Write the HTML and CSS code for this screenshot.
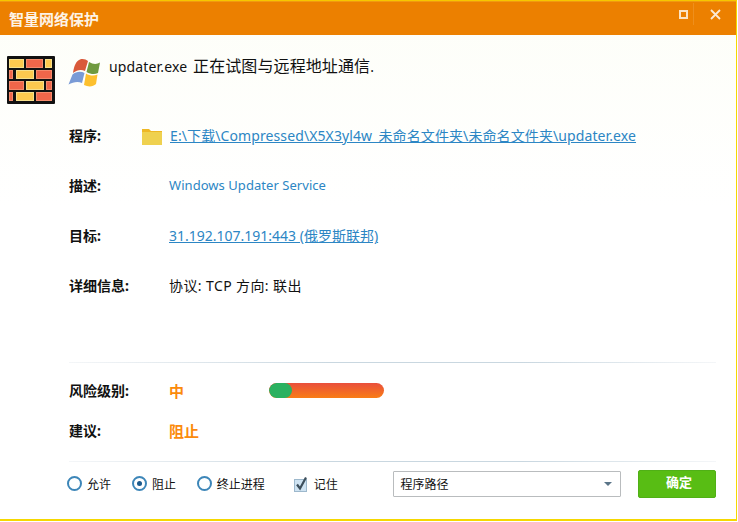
FILE: index.html
```html
<!DOCTYPE html>
<html lang="zh-CN">
<head>
<meta charset="utf-8">
<title>智量网络保护</title>
<link rel="stylesheet" href="styles.css">
</head>
<body>
<div class="window">
  <header class="titlebar">
    <span class="title">智量网络保护</span>
    <div class="winbtns">
      <span class="btn-max"><svg width="9" height="9" viewBox="0 0 9 9"><rect x="1" y="1" width="7" height="7" fill="none" stroke="#fbe3c4" stroke-width="2"/></svg></span>
      <span class="btn-close"><svg width="11" height="11" viewBox="0 0 11 11"><path d="M1 1 10 10M10 1 1 10" stroke="#fbe9d4" stroke-width="1.8" fill="none"/></svg></span>
    </div>
  </header>
  <main class="content">
    <section class="head">
      <svg class="wall" width="48" height="48" viewBox="0 0 48 48">
        <rect width="48" height="48" rx="1" fill="#111"/>
        <g fill="#fdc94f" stroke="#f7e08c" stroke-width="1">
          <rect x="2.500" y="3.500" width="14" height="8"/><rect x="38.500" y="3.500" width="6" height="8"/>
          <rect x="9.500" y="14.500" width="17" height="8"/>
          <rect x="19.500" y="25.500" width="17" height="8"/>
          <rect x="9.500" y="36.500" width="17" height="8"/>
        </g>
        <g fill="#f0664a" stroke="#f58a6c" stroke-width="1">
          <rect x="19.500" y="3.500" width="16" height="8"/>
          <rect x="2.500" y="14.500" width="3" height="8"/><rect x="29.500" y="14.500" width="15" height="8"/>
          <rect x="2.500" y="25.500" width="14" height="8"/><rect x="39.500" y="25.500" width="5" height="8"/>
          <rect x="2.500" y="36.500" width="3" height="8"/><rect x="29.500" y="36.500" width="15" height="8"/>
        </g>
      </svg>
      <svg class="winlogo" width="36" height="36" viewBox="0 0 36 36">
        <path d="M6 17C7 10 9 5 13 3.500C16 2.500 19 3.500 21 5L18 15C14 13 10 14 6 17Z" fill="#d9593a"/>
        <path d="M22 6C26 8.500 30 8.500 33 6.500L31 17C28 18.500 24 18.500 19.500 16Z" fill="#6f9a3f"/>
        <path d="M5.500 18.500C9 15.500 14 15 17.500 17L15 27C11 25 6 26 1.500 28.500Z" fill="#7a9bd6"/>
        <path d="M19 17.500C23 20 27 20 30.500 18.500L29 28C26 31 21 31 17 29Z" fill="#fdc02e"/>
      </svg>
      <h1 class="headline">updater.exe <span class="cjk-large">正在试图与远程地址通信</span>.</h1>
    </section>
    <dl class="info">
      <div class="row"><dt>程序:</dt><dd class="path"><svg class="folder" width="20" height="16" viewBox="0 0 20 16"><path d="M0 0H7L9 2H20V4H0Z" fill="#eeb825"/><rect y="3" width="20" height="13" fill="#efd14f"/></svg><a class="link" href="#">E:\下载\Compressed\X5X3yl4w_未命名文件夹\未命名文件夹\updater.exe</a></dd></div>
      <div class="row"><dt>描述:</dt><dd class="blue">Windows Updater Service</dd></div>
      <div class="row"><dt>目标:</dt><dd><a class="link" href="#">31.192.107.191:443 (俄罗斯联邦)</a></dd></div>
      <div class="row"><dt>详细信息:</dt><dd class="detail">协议: TCP 方向: 联出</dd></div>
    </dl>
    <hr class="rule rule-risk">
    <div class="risk">
      <div class="risk-row"><span class="label">风险级别:</span><span class="level">中</span><span class="bar"><span class="bar-fill"></span></span></div>
      <div class="risk-row"><span class="label">建议:</span><span class="level">阻止</span></div>
    </div>
    <hr class="rule rule-actions">
    <div class="actions">
      <label class="radio r1"><span class="dot"></span>允许</label>
      <label class="radio r2"><span class="dot on"></span>阻止</label>
      <label class="radio r3"><span class="dot"></span>终止进程</label>
      <label class="check"><svg width="14" height="16" viewBox="0 0 14 16"><rect x="0.500" y="3.500" width="12" height="12" fill="#cfe3f2" stroke="#9db8cc"/><path d="M3 8.500 6 12.500 12 1.500" fill="none" stroke="#3d4f5c" stroke-width="2.200"/></svg>记住</label>
      <div class="select"><span>程序路径</span><i class="caret"></i></div>
      <button class="ok" type="button">确定</button>
    </div>
  </main>
</div>
</body>
</html>
```

FILE: styles.css
```css
* { box-sizing: border-box; }
html, body { margin: 0; padding: 0; }
body { width: 738px; height: 522px; overflow: hidden; background: #fff; font-family: "Noto Sans", "Noto Sans CJK SC", sans-serif; font-size: 14px; color: #111; }
.window { width: 737px; height: 521px; border-top: 1px solid #f7c600; border-right: 1px solid #f5d800; border-bottom: 2px solid #f5d800; background: linear-gradient(#fdfef8, #ffffff 40%); display: flex; flex-direction: column; }
.titlebar { height: 34px; flex: none; background: #ec8000; border-top: 1px solid #f09a10; display: flex; align-items: center; justify-content: space-between; padding-left: 9px; color: #fff; }
.title { font-size: 15px; font-weight: 700; color: #fdf3e6; }
.winbtns { display: flex; align-items: center; height: 100%; padding-bottom: 9px; }
.btn-max { width: 13px; height: 13px; margin-right: 3px; display: flex; align-items: center; justify-content: center; }
.btn-close { width: 43px; height: 22px; border-left: 1px solid #ee8f1d; display: flex; align-items: center; justify-content: center; }
.content { flex: 1; display: flex; flex-direction: column; padding: 0 20px 0 0; min-height: 0; }
.head { display: flex; align-items: flex-start; padding: 21px 0 0 7px; height: 75px; flex: none; }
.wall { flex: none; }
.winlogo { flex: none; margin: 0 0 0 12px; }
.headline { margin: 0 0 0 6px; font-size: 14px; font-weight: 400; color: #111; line-height: 20px; letter-spacing: 0.15px; word-spacing: 2px; }
.cjk-large { font-size: 16px; letter-spacing: 0.1px; }
.info { margin: 0; padding: 0 0 0 69px; flex: none; }
.row { height: 50px; display: flex; align-items: center; }
dt { width: 100px; font-weight: 700; }
dd { margin: 0; display: flex; align-items: center; }
.path { margin-left: -27px; letter-spacing: 0.1px; }
.folder { margin: 3px 8px 0 0; flex: none; }
.blue { color: #2c86c4; font-size: 13px; letter-spacing: 0.05px; }
.link { color: #2c86c4; text-decoration: underline; }
.detail { letter-spacing: 0.4px; }
.rule { border: 0; height: 1px; margin: 0 0 0 69px; background: linear-gradient(90deg, #f4f6f8, #c9d7e0 40%, #c9d7e0 70%, #f4f6f8); flex: none; }
.rule-risk { margin-top: 52px; }
.risk { flex: none; padding: 7px 0 0 69px; }
.risk-row { height: 40px; display: flex; align-items: center; }
.label { width: 100px; font-weight: 700; }
.level { width: 100px; color: #fb8a0c; font-weight: 700; font-size: 15px; }
.bar { width: 115px; height: 15px; border-radius: 8px; background: linear-gradient(#e94f3c, #f97d16); overflow: hidden; display: block; }
.bar-fill { display: block; width: 23px; height: 100%; border-radius: 8px; background: #2bb160; }
.rule-actions { margin-top: 11px; }
.actions { flex: 1; display: flex; align-items: center; padding: 0 0 14px 67px; font-size: 12px; }
.radio { display: flex; align-items: center; gap: 5px; }
.r1 { width: 65px; }
.r2 { width: 65px; }
.r3 { width: 97px; }
.dot { width: 15px; height: 15px; border-radius: 50%; border: 2px solid #3d86b8; background: #fff; display: flex; align-items: center; justify-content: center; }
.dot.on::after { content: ""; width: 5px; height: 5px; border-radius: 50%; background: #1c5a8c; }
.check { display: flex; align-items: center; gap: 6px; width: 100px; }
.select { width: 228px; height: 26px; border: 1px solid #b9bcbe; border-radius: 1px; display: flex; align-items: center; justify-content: space-between; padding: 0 8px 0 6px; background: #fff; font-size: 12px; }
.caret { width: 0; height: 0; border-left: 4px solid transparent; border-right: 4px solid transparent; border-top: 4px solid #5a7488; }
.ok { width: 78px; height: 28px; margin-left: 17px; border: 1px solid #50b016; border-radius: 2px; background: #58bd14; color: #fff; font: 700 13px "Noto Sans CJK SC", sans-serif; padding: 0 0 5px 4px; }
```
